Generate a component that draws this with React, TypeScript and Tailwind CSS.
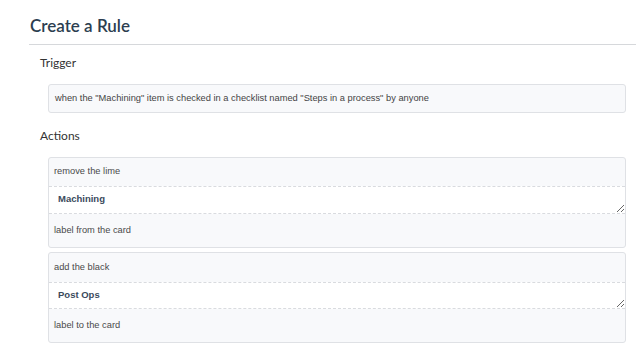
const actions = [
  { before: "remove the lime", label: "Machining", after: "label from the card", rows: ["h-[28px]", "h-[28px]", "h-[33px]"] },
  { before: "add the black", label: "Post Ops", after: "label to the card", rows: ["h-[29px]", "h-[27px]", "h-[33px]"] },
]

export default function App() {
  return (
    <div className="h-[360px] w-[636px] overflow-hidden bg-white font-['Liberation_Sans',Arial,sans-serif]">
      <header className="ml-[29px] h-[45px] border-b border-[#d6d8db] pl-[1px] pt-[14px]">
        <h1 className="font-['Lato',sans-serif] text-[17px] font-semibold leading-[24px] text-[#2c3e50]">Create a Rule</h1>
      </header>

      <section className="pl-[40px]">
        <h2 className="mt-[10px] font-['Lato',sans-serif] text-[12px] leading-[16px] text-[#333]">Trigger</h2>
        <div className="ml-[8px] mt-[13px] flex h-[29px] w-[578px] items-center rounded-[3px] border border-[#dfe1e5] bg-[#f8f9fb] pl-[6px] text-[9.3px] text-[#444]">
          when the "Machining" item is checked in a checklist named "Steps in a process" by anyone
        </div>

        <h2 className="mt-[15px] font-['Lato',sans-serif] text-[12px] leading-[16px] text-[#333]">Actions</h2>
        <div className="ml-[8px] mt-[13px] flex w-[578px] flex-col gap-[4px]">
          {actions.map((a) => (
            <div key={a.label} className="overflow-hidden rounded-[3px] border border-[#dfe1e5] bg-[#f8f9fb] text-[9.3px] text-[#4a4a4a]">
              <div className={`${a.rows[0]} flex items-center pl-[5px]`}>{a.before}</div>
              <textarea
                defaultValue={a.label}
                className={`${a.rows[1]} block w-full resize-y border-y border-dashed border-[#d9dbdf] bg-white px-[9px] py-[6px] text-[9.5px] font-bold leading-[12px] text-[#3b4a5c] outline-none`}
              />
              <div className={`${a.rows[2]} flex items-center pl-[5px]`}>{a.after}</div>
            </div>
          ))}
        </div>
      </section>
    </div>
  )
}
